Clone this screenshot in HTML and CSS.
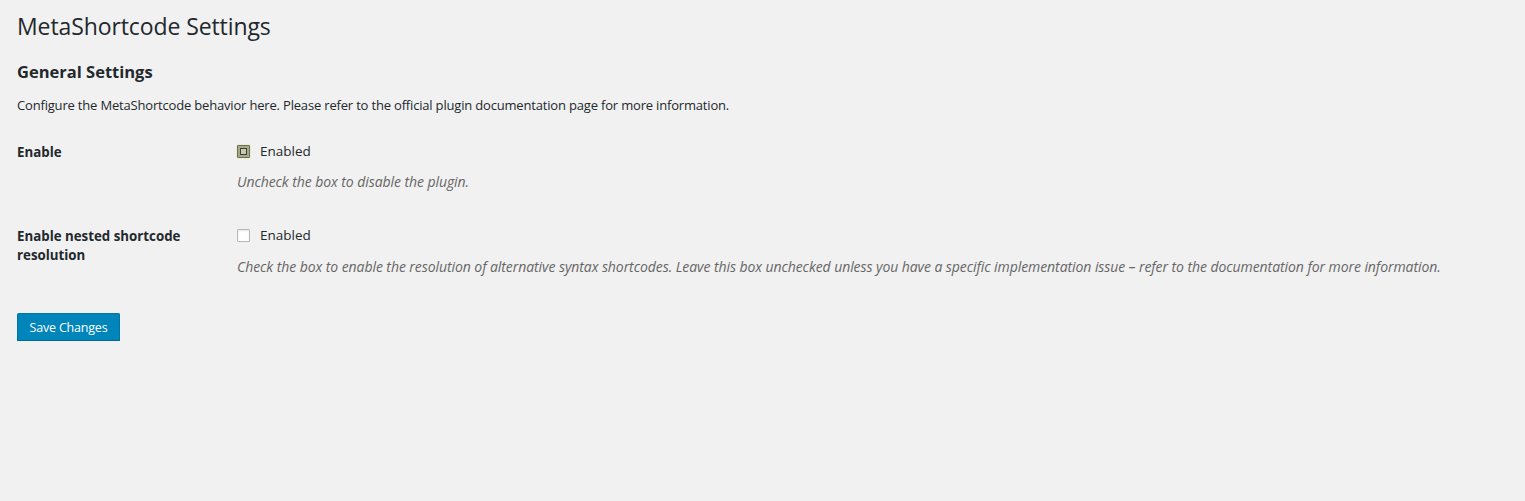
FILE: index.html
```html
<!DOCTYPE html>
<html>
<head>
<meta charset="utf-8">
<link rel="stylesheet" href="styles.css">
</head>
<body>
<div class="wrap">
  <h1 class="page-title">MetaShortcode Settings</h1>
  <h2 class="section-title">General Settings</h2>
  <p class="intro">Configure the MetaShortcode behavior here. Please refer to the official plugin documentation page for more information.</p>
  <div class="form-table">
    <div class="row">
      <div class="th">Enable</div>
      <div class="td">
        <label class="check-label"><span class="cb cb-checked"><span class="cb-mark"></span></span>Enabled</label>
        <p class="description">Uncheck the box to disable the plugin.</p>
      </div>
    </div>
    <div class="row row-second">
      <div class="th">Enable nested shortcode resolution</div>
      <div class="td">
        <label class="check-label"><span class="cb"></span>Enabled</label>
        <p class="description">Check the box to enable the resolution of alternative syntax shortcodes. Leave this box unchecked unless you have a specific implementation issue – refer to the documentation for more information.</p>
      </div>
    </div>
  </div>
  <div class="submit"><button class="button-primary">Save Changes</button></div>
</div>
</body>
</html>
```
FILE: styles.css
```css
html, body {
  margin: 0;
  padding: 0;
  background: #f1f1f1;
}
body {
  font-family: "Open Sans", "Noto Sans", sans-serif;
  color: #23282d;
}
.wrap {
  padding: 0 0 0 17px;
}
.page-title {
  font-size: 23px;
  font-weight: 400;
  line-height: 29px;
  margin: 12px 0 0;
  letter-spacing: -0.1px;
}
.section-title {
  font-size: 16.5px;
  font-weight: 700;
  line-height: 22px;
  margin: 20px 0 0;
}
.intro {
  font-size: 13px;
  line-height: 18px;
  margin: 13px 0 0;
  letter-spacing: -0.18px;
}
.form-table {
  margin-top: 27px;
}
.row {
  display: grid;
  grid-template-columns: 220px 1fr;
}
.row-second {
  margin-top: 33px;
}
.th {
  font-size: 13.3px;
  font-weight: 700;
  line-height: 19px;
  width: 175px;
  padding-top: 1.5px;
}
.check-label {
  display: flex;
  align-items: center;
  height: 20px;
  font-size: 13.5px;
}
.cb {
  box-sizing: border-box;
  width: 13px;
  height: 13px;
  border: 1px solid #b4b9be;
  background: #fff;
  border-radius: 1px;
  margin-right: 10px;
  box-shadow: inset 0 1px 2px rgba(0,0,0,0.1);
  display: flex;
  align-items: center;
  justify-content: center;
}
.cb-checked {
  background: #a7a78c;
  border-color: #6e6e5c;
  box-shadow: 0 0 0 1px #e9eccf;
}
.cb-mark {
  box-sizing: border-box;
  width: 7px;
  height: 7px;
  border: 1px solid #3f3f36;
  background: #c9c9b2;
}
.description {
  margin: 11px 0 0;
  font-size: 14px;
  line-height: 20px;
  font-style: italic;
  color: #666;
  letter-spacing: -0.07px;
}
.row-second .description {
  margin-top: 12px;
}
.submit {
  margin-top: 36px;
}
.button-primary {
  box-sizing: border-box;
  height: 28px;
  width: 103px;
  padding: 0 8px;
  font-family: "Open Sans", "Noto Sans", sans-serif;
  font-size: 12.5px;
  color: #fff;
  background: #0085ba;
  border: 1px solid #0073aa;
  border-bottom-color: #006799;
  border-radius: 2px;
  box-shadow: 0 1px 0 #006799;
  letter-spacing: -0.2px;
}
```
